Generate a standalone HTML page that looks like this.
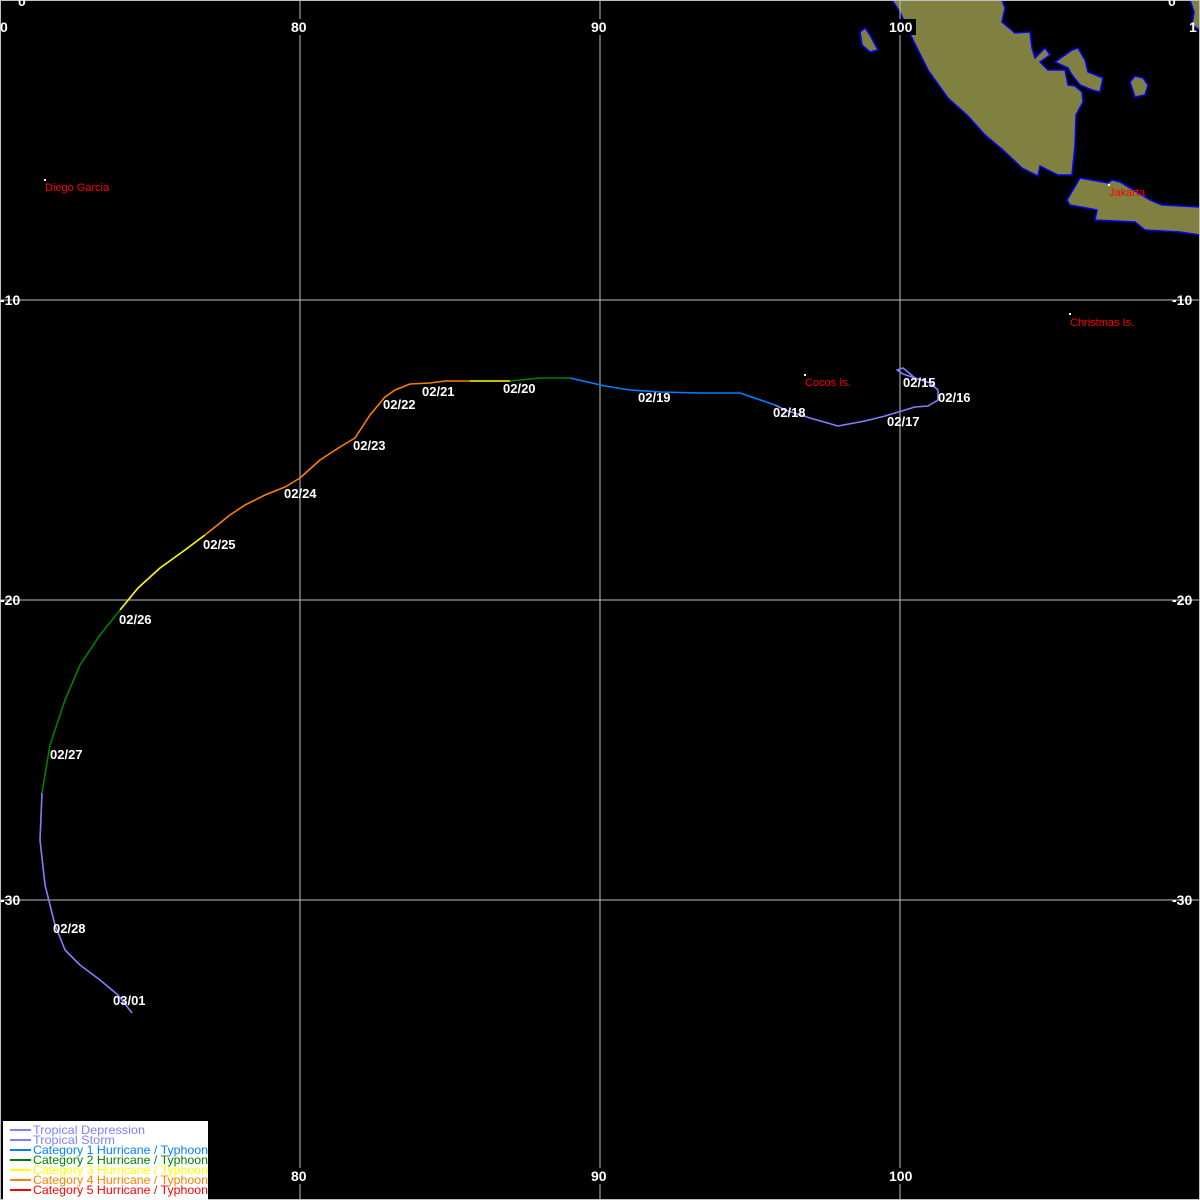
<!DOCTYPE html>
<html><head><style>
body{margin:0;background:#000;}
svg{display:block}
</style></head><body>
<svg width="1200" height="1200" xmlns="http://www.w3.org/2000/svg" font-family="Liberation Sans, sans-serif">
<rect width="1200" height="1200" fill="#000"/>
<g fill="#808040" stroke="#0000ff" stroke-width="1.5">
<path d="M892,0 L900,12 L913,40 L928,70 L948,98 L968,116 L985,135 L1003,150 L1022,168 L1038,176 L1040,166 L1058,175 L1072,175 L1075,145 L1076,115 L1083,102 L1082,92 L1075,86 L1068,85 L1065,70 L1048,70 L1040,62 L1050,55 L1045,48 L1035,58 L1032,48 L1030,32 L1015,33 L1002,22 L1005,8 L1002,0 Z"/>
<path d="M1055,62 L1072,50 L1078,48 L1085,60 L1088,72 L1103,78 L1100,92 L1092,90 L1080,85 L1072,75 L1068,68 Z"/>
<path d="M1067,200 L1080,178 L1108,183 L1112,180 L1120,182 L1150,200 L1162,205 L1200,207 L1200,235 L1180,232 L1145,230 L1135,222 L1095,220 L1097,210 L1070,205 Z"/>
<path d="M860,32 L865,28 L870,35 L878,50 L870,52 L862,45 Z"/>
<path d="M1130,82 L1135,76 L1143,78 L1148,85 L1145,95 L1135,97 Z"/>
<path d="M1190,0 L1200,0 L1200,30 L1192,25 L1194,12 Z"/>
</g>
<g stroke="#c0c0c0" stroke-width="1">
<line x1="300" y1="0" x2="300" y2="1200"/><line x1="600" y1="0" x2="600" y2="1200"/><line x1="900" y1="0" x2="900" y2="1200"/>
<line x1="0" y1="300" x2="1200" y2="300"/><line x1="0" y1="600" x2="1200" y2="600"/><line x1="0" y1="900" x2="1200" y2="900"/>
<rect x="0.5" y="0.5" width="1199" height="1199" fill="none"/>
</g>
<g fill="#000">
<rect x="290" y="19" width="20" height="16"/><rect x="590" y="19" width="20" height="16"/><rect x="888" y="19" width="28" height="16"/>
<rect x="290" y="1168" width="20" height="16"/><rect x="590" y="1168" width="20" height="16"/><rect x="888" y="1168" width="28" height="16"/>
</g>
<g fill="#fff" font-size="14" font-weight="bold">
<text x="291" y="32">80</text><text x="591" y="32">90</text><text x="889" y="32">100</text>
<text x="291" y="1181">80</text><text x="591" y="1181">90</text><text x="889" y="1181">100</text>
<text x="0" y="32">0</text><text x="1189" y="32">1</text>
<text x="0" y="305">-10</text><text x="0" y="605">-20</text><text x="0" y="905">-30</text>
<text x="1172" y="305">-10</text><text x="1172" y="605">-20</text><text x="1172" y="905">-30</text>
<text x="18" y="6">0</text><text x="1168" y="6">0</text>
</g>
<g fill="red" font-size="11">
<rect x="44" y="179" width="2" height="2" fill="#fff"/><text x="45" y="191">Diego Garcia</text>
<rect x="804" y="374" width="2" height="2" fill="#fff"/><text x="805" y="386">Cocos Is.</text>
<rect x="1069" y="313" width="2" height="2" fill="#fff"/><text x="1070" y="326">Christmas Is.</text>
<rect x="1108" y="184" width="2" height="2" fill="#fff"/><text x="1109" y="196">Jakarta</text>
</g>
<g fill="none" stroke-width="1.6" stroke-linejoin="round">
<polyline stroke="#8080ff" points="775,405 785,410 810,418 838,426 865,421 885,416 905,410 915,407 928,406 938,400 938,390 930,383 915,378 903,374 897,370 903,368 915,378"/>
<polyline stroke="#0080ff" points="775,405 740,393 700,393 660,392 630,390 605,386 570,378"/>
<polyline stroke="#008000" points="570,378 540,378 510,381"/>
<polyline stroke="#ffff00" points="510,381 470,381"/>
<polyline stroke="#ff8000" points="470,381 445,381 430,383 410,384 395,390 385,397 370,415 355,438 340,447 320,460 300,478 285,487 265,495 245,505 230,515 205,535"/>
<polyline stroke="#ffff00" points="205,535 185,550 160,568 138,588 120,610"/>
<polyline stroke="#008000" points="120,610 100,635 80,665 65,700 50,745 42,793"/>
<polyline stroke="#8080ff" points="42,793 40,840 45,885 55,925 65,950 80,965 100,980 118,995 132,1013"/>
</g>
<g fill="#fff" font-size="13" font-weight="bold">
<text x="903" y="387">02/15</text><text x="938" y="402">02/16</text><text x="887" y="426">02/17</text>
<text x="773" y="417">02/18</text><text x="638" y="402">02/19</text><text x="503" y="393">02/20</text>
<text x="422" y="396">02/21</text><text x="383" y="409">02/22</text><text x="353" y="450">02/23</text>
<text x="284" y="498">02/24</text><text x="203" y="549">02/25</text><text x="119" y="624">02/26</text>
<text x="50" y="759">02/27</text><text x="53" y="933">02/28</text><text x="113" y="1005">03/01</text>
</g>
<rect x="3" y="1121" width="205" height="79" fill="#fff"/>
<g font-size="12" stroke-width="2" lengthAdjust="spacingAndGlyphs">
<line x1="10" y1="1130" x2="31" y2="1130" stroke="#8080ff"/><text x="33" y="1134" fill="#8080ff" textLength="112" lengthAdjust="spacingAndGlyphs">Tropical Depression</text>
<line x1="10" y1="1140" x2="31" y2="1140" stroke="#8080ff"/><text x="33" y="1144" fill="#8080ff" textLength="82" lengthAdjust="spacingAndGlyphs">Tropical Storm</text>
<line x1="10" y1="1150" x2="31" y2="1150" stroke="#0080ff"/><text x="33" y="1154" fill="#0080ff" textLength="175" lengthAdjust="spacingAndGlyphs">Category 1 Hurricane / Typhoon</text>
<line x1="10" y1="1160" x2="31" y2="1160" stroke="#008000"/><text x="33" y="1164" fill="#008000" textLength="175" lengthAdjust="spacingAndGlyphs">Category 2 Hurricane / Typhoon</text>
<line x1="10" y1="1170" x2="31" y2="1170" stroke="#ffff00"/><text x="33" y="1174" fill="#ffff00" textLength="175" lengthAdjust="spacingAndGlyphs">Category 3 Hurricane / Typhoon</text>
<line x1="10" y1="1180" x2="31" y2="1180" stroke="#ff8000"/><text x="33" y="1184" fill="#ff8000" textLength="175" lengthAdjust="spacingAndGlyphs">Category 4 Hurricane / Typhoon</text>
<line x1="10" y1="1190" x2="31" y2="1190" stroke="#ff0000"/><text x="33" y="1194" fill="#ff0000" textLength="175" lengthAdjust="spacingAndGlyphs">Category 5 Hurricane / Typhoon</text>
</g>
</svg>
</body></html>
